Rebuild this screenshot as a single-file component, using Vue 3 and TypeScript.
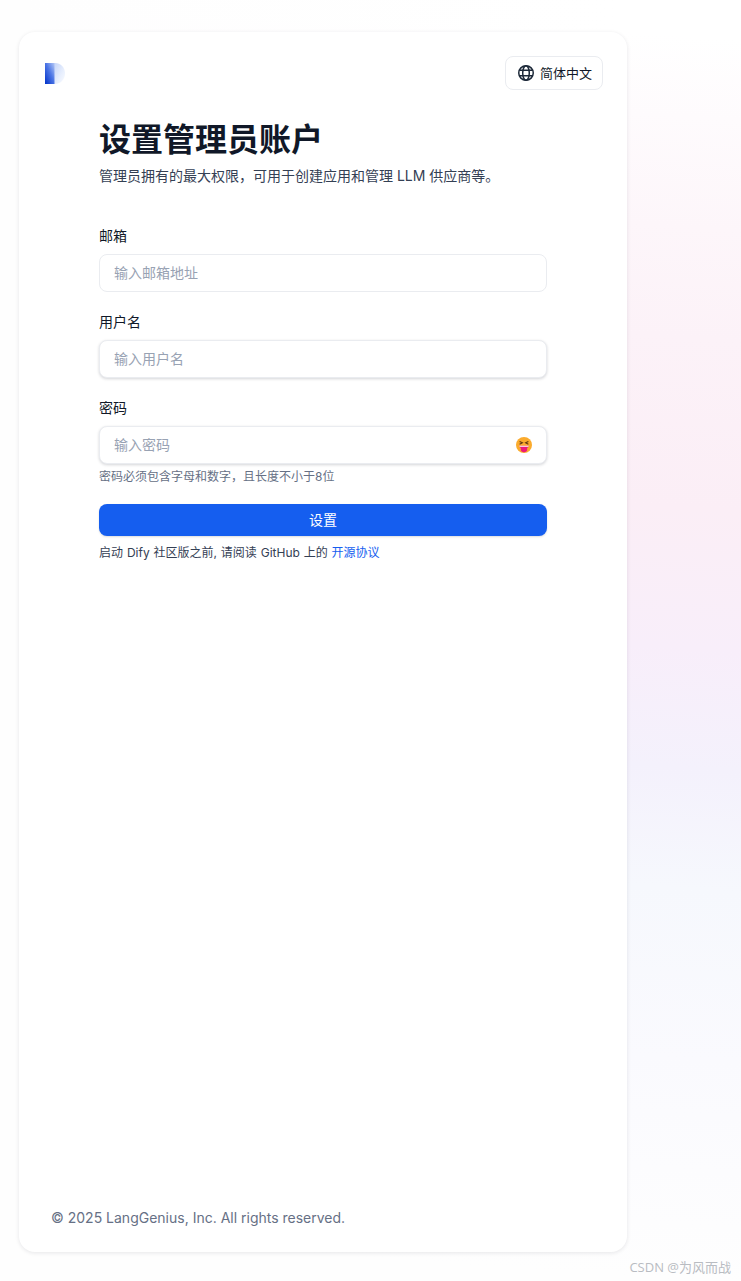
<script setup lang="ts">
const fields = [
  { label: "邮箱", placeholder: "输入邮箱地址", type: "email", raised: false },
  { label: "用户名", placeholder: "输入用户名", type: "text", raised: true },
];
</script>

<template>
  <div class="page">
    <div class="card">
      <header class="top">
        <svg class="logo" width="20" height="21" viewBox="0 0 20 21" aria-label="Logo">
          <defs>
            <linearGradient id="logo-left" x1="0" y1="1" x2="1" y2="0">
              <stop offset="0" stop-color="#0030c8" />
              <stop offset="0.55" stop-color="#4f78e6" />
              <stop offset="1" stop-color="#b4c8f6" />
            </linearGradient>
            <linearGradient id="logo-right" x1="0" y1="0" x2="1" y2="1">
              <stop offset="0" stop-color="#c4d4f9" />
              <stop offset="0.6" stop-color="#e8effd" />
              <stop offset="1" stop-color="#fafcff" />
            </linearGradient>
          </defs>
          <path d="M9 0H10C15.8 0 20 4.4 20 10.3C20 16.3 15.8 21 10 21H9V0Z" fill="url(#logo-right)" />
          <path d="M0 0H9.5V21H0Z" fill="url(#logo-left)" />
        </svg>
        <button class="lang" type="button">
          <svg width="16" height="16" viewBox="0 0 16 16" fill="none" stroke="#1d2939" stroke-width="1.5">
            <circle cx="8" cy="8" r="7.25" />
            <ellipse cx="8" cy="8" rx="3.3" ry="7.25" />
            <path d="M1.4 5.2H14.6M1.4 10.8H14.6" />
          </svg>
          <span>简体中文</span>
        </button>
      </header>

      <main class="content">
        <h1>设置管理员账户</h1>
        <p class="sub">管理员拥有的最大权限，可用于创建应用和管理 LLM 供应商等。</p>

        <form class="form" @submit.prevent>
          <div v-for="f in fields" :key="f.label" class="field">
            <label>{{ f.label }}</label>
            <div :class="['input', { 'input--raised': f.raised }]">
              <input :type="f.type" :placeholder="f.placeholder" />
            </div>
          </div>

          <div class="field field--last">
            <label>密码</label>
            <div class="input input--raised">
              <input type="password" placeholder="输入密码" />
              <svg class="emoji" width="16" height="16" viewBox="0 0 16 16">
                <circle cx="8" cy="8" r="8" fill="#fbab2d" />
                <path d="M3.6 4.4L6.4 5.8L3.6 7.2" fill="none" stroke="#5f3410" stroke-width="1.1" />
                <path d="M12.4 4.4L9.6 5.8L12.4 7.2" fill="none" stroke="#5f3410" stroke-width="1.1" />
                <path d="M3.2 8.8H12.8C12.6 10 11.8 10.6 11.2 10.9V12.6C11.2 14.4 9.8 15.3 8 15.3C6.2 15.3 4.8 14.4 4.8 12.6V10.9C4.2 10.6 3.4 10 3.2 8.8Z" fill="#ec1a78" />
                <path d="M3.2 8.8H12.8L12.4 9.7H3.6Z" fill="#ffffff" />
              </svg>
            </div>
            <p class="hint">密码必须包含字母和数字，且长度不小于8位</p>
          </div>

          <button class="submit" type="submit">设置</button>
          <p class="note">启动 Dify 社区版之前, 请阅读 GitHub 上的 <a href="#">开源协议</a></p>
        </form>
      </main>

      <footer class="foot">© 2025 LangGenius, Inc. All rights reserved.</footer>
    </div>
    <span class="mark">CSDN @为风而战</span>
  </div>
</template>

<style>
html,
body {
  margin: 0;
  background: #fff;
}
</style>

<style scoped>
.page {
  position: relative;
  box-sizing: border-box;
  height: 1281px;
  padding: 32px 114px 29px 19px;
  overflow: hidden;
  font-family: Inter, "Noto Sans CJK SC", sans-serif;
  color: #101828;
  background:
    linear-gradient(90deg, #fefefe 0, #fefefe 20px, rgba(254, 254, 254, 0) 620px),
    linear-gradient(
      184deg,
      #ffffff 40px,
      #fefbfd 120px,
      #fdf6fa 230px,
      #fcf2f8 340px,
      #fbeef6 510px,
      #f8eefa 650px,
      #f4f1fc 770px,
      #f6f8fd 890px,
      #fafafe 1060px,
      #fefefe 1281px
    );
}

.card {
  box-sizing: border-box;
  height: 100%;
  display: flex;
  flex-direction: column;
  background: #fff;
  border-radius: 16px;
  box-shadow: 0 1px 4px rgba(16, 24, 40, 0.1);
}

.top {
  display: flex;
  align-items: center;
  justify-content: space-between;
  padding: 24px 24px 0 26px;
}

.logo {
  display: block;
}

.lang {
  display: flex;
  align-items: center;
  gap: 6px;
  box-sizing: border-box;
  height: 34px;
  padding: 0 10px 0 12px;
  background: #fff;
  border: 1px solid #eaecf0;
  border-radius: 8px;
  font: 13px Inter, "Noto Sans CJK SC", sans-serif;
  color: #101828;
}

.lang span {
  margin-bottom: 2px;
}

.content {
  flex: 1;
  width: 448px;
  margin-left: 80px;
  padding-top: 28px;
}

h1 {
  margin: 0;
  font-size: 32px;
  line-height: 44px;
  font-weight: 700;
}

.sub {
  margin: 4px 0 0;
  font-size: 14px;
  line-height: 20px;
  color: #344054;
}

.form {
  margin-top: 40px;
}

.field {
  margin-bottom: 20px;
}

.field--last {
  margin-bottom: 19px;
}

label {
  display: block;
  margin-bottom: 8px;
  font-size: 14px;
  line-height: 20px;
  color: #101828;
}

.input {
  display: flex;
  align-items: center;
  box-sizing: border-box;
  height: 38px;
  padding: 0 14px;
  border: 1px solid #eaecf0;
  border-radius: 8px;
  background: #fff;
}

.input--raised {
  box-shadow: 0 1px 3px rgba(16, 24, 40, 0.18);
}

input {
  flex: 1;
  min-width: 0;
  padding: 0 0 2px;
  border: 0;
  outline: 0;
  background: none;
  font: 14px Inter, "Noto Sans CJK SC", sans-serif;
  color: #101828;
}

input::placeholder {
  color: #98a2b3;
  opacity: 1;
}

.hint {
  margin: 5px 0 0;
  font-size: 12px;
  line-height: 16px;
  color: #667085;
}

.submit {
  display: block;
  width: 100%;
  height: 32px;
  padding: 0 0 2px;
  border: 0;
  border-radius: 8px;
  background: #155eef;
  box-shadow: 0 1px 2px rgba(16, 24, 40, 0.15);
  color: #fff;
  font: 14px Inter, "Noto Sans CJK SC", sans-serif;
}

.note {
  margin: 9px 0 0;
  font-size: 12px;
  line-height: 16px;
  word-spacing: 0.5px;
  color: #344054;
}

.note a {
  color: #155eef;
  text-decoration: none;
}

.foot {
  padding: 0 32px 24px 32px;
  font-size: 14px;
  line-height: 20px;
  color: #667085;
}

.mark {
  position: absolute;
  right: 10px;
  bottom: 5px;
  font-family: "Open Sans", "Noto Sans CJK SC", sans-serif;
  font-size: 13px;
  line-height: 18px;
  color: #b9bcc2;
}
</style>
